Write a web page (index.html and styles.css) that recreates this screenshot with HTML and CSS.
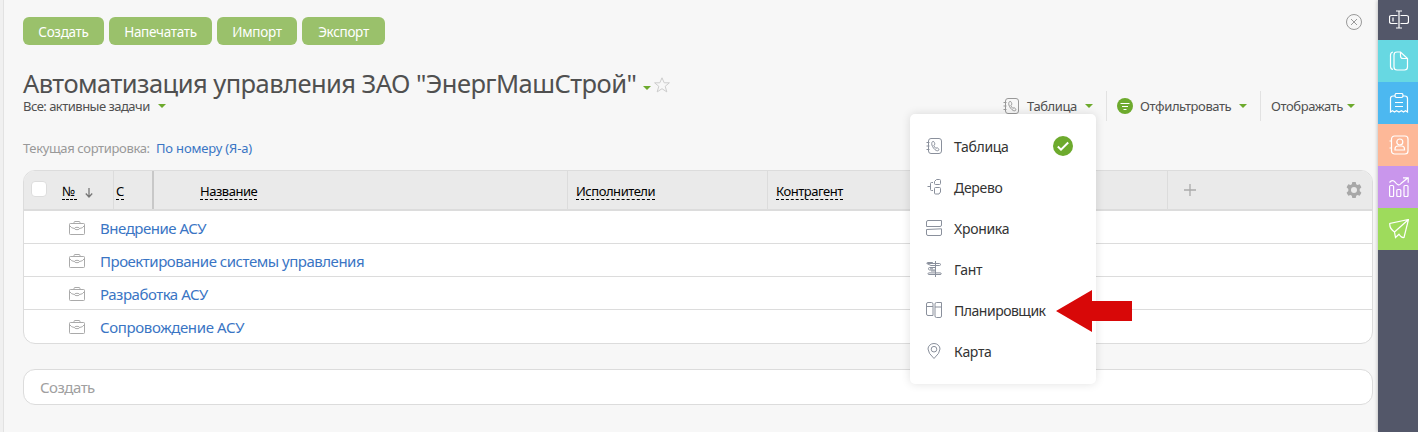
FILE: index.html
```html
<!DOCTYPE html>
<html lang="ru">
<head>
  <title>Автоматизация управления</title>
  <meta charset="UTF-8"/>
  <meta name="viewport" content="width=device-width,initial-scale=1"/>
  <link rel="stylesheet" href="styles.css">
</head>
<body>
  <svg class="defs">
    <symbol id="book" viewBox="0 0 16 16">
      <rect x="2.5" y=".5" width="13" height="15" rx="2.5"/>
      <path d="M.5 4.5h3M.5 8h3M.5 11.5h3M7 3.2c-1.6 1-1.6 3.200-.5 5.300 1.200 2.300 3.500 4.500 5.200 4.300.8-.1 1.500-.9 1.300-1.400l-1.800-1.700-1.400.6c-1-.8-1.700-1.900-2-3l1.100-1c-.1-1.200-.8-2.900-1.900-3.100z"/>
    </symbol>
    <symbol id="case" viewBox="0 0 16 14">
      <rect x=".5" y="2.500" width="15" height="11" rx=".8"/>
      <path d="M5 2.500v-1q0-1 1-1h4q1 0 1 1v1M.5 4.500q2 3 5 3M15.500 4.500q-2 3-5 3"/>
      <ellipse cx="8" cy="7.500" rx="2.500" ry="1.200"/>
    </symbol>
  </svg>
  <main>
    <div class="buttons">
      <button class="b1">Создать</button>
      <button class="b2">Напечатать</button>
      <button class="b3">Импорт</button>
      <button class="b4">Экспорт</button>
      <svg class="close" viewBox="0 0 16 16"><circle cx="8" cy="8" r="7.500"/><path d="M5 5l6 6M11 5l-6 6"/></svg>
    </div>
    <div class="head">
      <div>
        <div class="title">
          <h1>Автоматизация управления ЗАО "ЭнергМашСтрой"</h1>
          <i class="caret"></i>
          <svg class="star" viewBox="0 0 16 16"><path d="M8 .8l2.200 5h5.200l-4.200 3.500 1.600 5.600L8 11.700l-4.800 3.200 1.600-5.600L.6 5.800h5.200z"/></svg>
        </div>
        <div class="view"><span>Все: активные задачи</span><i class="caret"></i></div>
      </div>
      <div class="tools">
        <div class="tool t1">
          <svg class="icon grey"><use href="#book"/></svg>
          <span>Таблица</span><i class="caret"></i>
          <ul class="menu">
            <li>
              <svg class="icon"><use href="#book"/></svg><span>Таблица</span>
              <svg class="check" viewBox="0 0 20 20"><circle cx="10" cy="10" r="10"/><path d="M4.800 10.500l3.200 3.200 7.200-7.200"/></svg>
            </li>
            <li>
              <svg class="icon" viewBox="0 0 16 16"><path d="M1.500 7.500h3M7 3.500H5.500q-1 0-1 1v6q0 1 1 1H7"/><path d="M10.500.5h3q1 0 1 1v3q0 1-1 1h-4q-1 0-1-1v-2zM9.500 8.500h4q1 0 1 1v3.500l-1.500 2h-3.500q-1 0-1-1v-4.500q0-1 1-1z"/></svg><span>Дерево</span>
            </li>
            <li>
              <svg class="icon" viewBox="0 0 16 16"><path d="M2 .5h13.500v4.500q0 1.500-1.500 1.500H.5V2Q.5.500 2 .5zM.5 9.500l15-.7v5.200q0 1.500-1.500 1.500H2q-1.500 0-1.500-1.500z"/></svg><span>Хроника</span>
            </li>
            <li>
              <svg class="icon" viewBox="0 0 16 16"><path d="M9.500 0v16M1.500 2.500h12q1 0 1 1t-1 1h-4M9.500 4.500H5L.8 2.500q0-1 1-1h5M9.500 6.500H3.500q-1 0-1 1.200t1 1.300h6M9.500 13.500H3q-1 0-1-.8t1-.8h11q1.300 0 1.300.8t-1.300.8H9.500M4 7.800h3M5 10h4"/></svg><span>Гант</span>
            </li>
            <li>
              <svg class="icon" viewBox="0 0 16 16"><path d="M2 .5h3.500q1.500 0 1.500 1.500v11.500H2Q.5 13.500.5 12V2Q.5.500 2 .5zM.5 4.500H7M15.500.5v13.500q0 1.500-1.500 1.500h-3.500q-1.500 0-1.500-1.500V2Q9 .5 10.500.5zM9 5h6.500"/></svg><span class="planner">Планировщик</span>
              <svg class="arrow" viewBox="0 0 76 42"><path d="M0 21L36 0v11h40v20H36v11z"/></svg>
            </li>
            <li>
              <svg class="icon" viewBox="0 0 16 16"><path d="M8 15.500Q2 10 2 6a6 5.500 0 0 1 12 0q0 4-6 9.500z"/><circle cx="8" cy="6.200" r="2.800"/></svg><span>Карта</span>
            </li>
          </ul>
        </div>
        <div class="tool t2">
          <svg class="filter" viewBox="0 0 16 16"><circle cx="8" cy="8" r="8"/><path d="M3.500 5.500h9M5 8.500h6M6.500 11.500h3"/></svg>
          <span>Отфильтровать</span><i class="caret"></i>
        </div>
        <div class="tool t3"><span>Отображать</span><i class="caret"></i></div>
      </div>
    </div>
    <div class="sort"><span>Текущая сортировка:</span><a>По номеру (Я-а)</a></div>
    <div class="table">
      <div class="row header">
        <div class="num"><i class="checkbox"></i><span>№</span><svg class="down" viewBox="0 0 8 10"><path d="M4 0v9M.8 5.500L4 9l3.200-3.500"/></svg></div>
        <div class="c"><span>С</span></div>
        <div class="name"><span>Название</span></div>
        <div><span>Исполнители</span></div>
        <div><span>Контрагент</span></div>
        <div></div>
        <div class="last">
          <svg class="plus" viewBox="0 0 12 12"><path d="M6 0v12M0 6h12"/></svg>
          <svg class="gear" viewBox="0 0 16 16"><path d="M6.300 0h3.400l.5 2.300 1.300.8 2.200-.8 1.700 3-1.700 1.600v2.200l1.700 1.600-1.700 3-2.200-.8-1.300.8-.5 2.300H6.300l-.5-2.300-1.300-.8-2.200.8-1.700-3 1.700-1.600V6.900L.6 5.300l1.700-3 2.200.8 1.300-.8z"/><circle cx="8" cy="8" r="3"/></svg>
        </div>
      </div>
      <div class="row item"><svg class="case"><use href="#case"/></svg><a>Внедрение АСУ</a></div>
      <div class="row item"><svg class="case"><use href="#case"/></svg><a>Проектирование системы управления</a></div>
      <div class="row item"><svg class="case"><use href="#case"/></svg><a>Разработка АСУ</a></div>
      <div class="row item"><svg class="case"><use href="#case"/></svg><a class="wide">Сопровождение АСУ</a></div>
    </div>
    <div class="create">Создать</div>
  </main>
  <nav>
    <div class="rename"><svg viewBox="0 0 20 20"><path d="M8.500 5.500H2.500q-2 0-2 2v4q0 2 2 2h6M11.500 5.500h6q2 0 2 2v4q0 2-2 2h-6M10 1v17M7 1h6M7 18h6M4 7.500v4"/></svg></div>
    <div class="files"><svg viewBox="0 0 20 20"><path d="M11.500 1H8Q5 1 5 4v12q0 3 3 3h7.500q3 0 3-3V7.500zM11.500 1v4q0 2.500 2.500 2.500h4.500M4 1Q1.500 1.500 1.500 4v11.500q0 2.500 2.500 3"/></svg></div>
    <div class="tasks"><svg viewBox="0 0 20 20"><path d="M6 3H4Q1.500 3 1.500 5.500V19l2-1.200 2 1.200 2-1.200 2.500 1.200 2.500-1.200 2 1.200 2-1.200 2 1.200V5.500Q18.500 3 16 3h-2"/><path d="M7.500.5h5q1.500 0 1.500 2t-1.500 2h-5Q6 4.500 6 2.500t1.500-2zM6 9.500h8M6 13.500h8"/></svg></div>
    <div class="contacts"><svg viewBox="0 0 20 20"><rect x="2.500" y="1" width="16.500" height="18" rx="3"/><circle cx="10.800" cy="7" r="3"/><path d="M6 15v-1q0-3 3-3h3.500q3 0 3 3v1zM.5 6h2M.5 13h2"/></svg></div>
    <div class="charts"><svg viewBox="0 0 20 20"><rect x=".6" y="8.500" width="4" height="11" rx="1"/><rect x="7.800" y="12.500" width="4" height="7" rx="1"/><rect x="15" y="8.500" width="4" height="11" rx="1"/><path d="M.5 5.500q3-3.500 5.500-.5 3.500 5 6 1.500L19 .8M14 .8h5.200v5"/></svg></div>
    <div class="send"><svg viewBox="0 0 20 20"><path d="M19.500.5L.8 4.500q-.5 5 4.700 8.500l1 5.500 3.500-3.300q2.500 4 5 3.300zM19.500.5L5.500 13"/></svg></div>
  </nav>
</body>
</html>
```
FILE: styles.css
```css
* {
  box-sizing: border-box;
}
body {
  margin: 0;
  width: 1418px;
  height: 432px;
  display: flex;
  overflow: hidden;
  background: #f7f7f7;
  font: 13px "Noto Sans", "Open Sans", sans-serif;
  color: #505050;
}
svg {
  fill: none;
  stroke: #999;
  flex: none;
}
.defs {
  display: none;
}
main {
  width: 1378px;
  padding: 17px 5px 0 19px;
  border-left: 1px solid #e2e2e2;
  box-shadow: -3px 0 #f0f0f0;
  margin-left: 3px;
}
.buttons {
  display: flex;
  gap: 5px;
}
button {
  height: 28px;
  padding: 2px 0 0;
  border: 0;
  border-radius: 6px;
  background: #9ac16b;
  color: #fff;
  font: 13.5px "Noto Sans", sans-serif;
  letter-spacing: -.3px;
}
.b1 { width: 81px; }
.b2 { width: 103px; }
.b3 { width: 80px; }
.b4 { width: 83px; }
.close {
  width: 16px;
  height: 16px;
  margin: -3px 11px 0 auto;
}
.caret {
  border: 4px solid transparent;
  border-top-color: #6daa2d;
  border-bottom: 0;
}
.head {
  display: flex;
  justify-content: space-between;
  align-items: flex-end;
  height: 55px;
  margin-top: 21px;
}
.head > div:first-child {
  height: 55px;
}
.title {
  display: flex;
  height: 33px;
}
h1 {
  margin: 0;
  font-size: 25.5px;
  font-weight: normal;
  letter-spacing: -.54px;
  line-height: 34px;
  white-space: nowrap;
  width: 620px;
}
.title .caret {
  margin-top: 20px;
  align-self: flex-start;
}
.star {
  width: 16px;
  height: 16px;
  margin: 11px 0 0 3px;
  stroke: #ccc;
}
.view {
  display: flex;
  align-items: center;
  height: 14px;
}
.view span {
  width: 135px;
  white-space: nowrap;
  letter-spacing: -.52px;
}
.tools {
  display: flex;
  padding-right: 8px;
}
.tool {
  position: relative;
  display: flex;
  align-items: center;
  height: 30px;
  white-space: nowrap;
}
.tool > span {
  letter-spacing: -.42px;
}
.tool + .tool {
  border-left: 1px solid #e2e2e2;
}
.t1 { width: 103px; }
.t2 { width: 154px; padding-left: 10px; }
.t3 { width: 105px; padding-left: 10px; }
.icon {
  width: 16px;
  height: 16px;
  stroke: #8a909c;
}
.icon.grey {
  stroke: #999;
}
.t1 > span {
  width: 58px;
  margin-left: 8px;
}
.t2 > span {
  width: 99px;
  margin-left: 7px;
}
.t3 > span {
  width: 76px;
}
.filter {
  width: 16px;
  height: 16px;
  fill: #6daa2d;
  stroke: none;
}
.filter path {
  stroke: #fff;
}
.menu {
  position: absolute;
  top: 23px;
  right: 10px;
  z-index: 1;
  width: 186px;
  height: 270px;
  margin: 0;
  padding: 11.5px 23px 0 16px;
  list-style: none;
  background: #fff;
  border-radius: 5px;
  box-shadow: 0 0 10px rgba(0, 0, 0, .12);
  font-size: 14px;
  letter-spacing: -.32px;
  color: #333;
}
.menu li {
  position: relative;
  display: flex;
  align-items: center;
  height: 41px;
}
.menu span {
  margin: 1px 0 0 12px;
}
.menu .planner {
  letter-spacing: -.5px;
}
.check {
  width: 20px;
  height: 20px;
  margin-left: auto;
  fill: #6daa2d;
  stroke: none;
}
.check path {
  fill: none;
  stroke: #fff;
  stroke-width: 2;
}
.arrow {
  position: absolute;
  left: 130px;
  top: .5px;
  width: 76px;
  height: 42px;
  fill: #d80808;
  stroke: none;
}
.sort {
  display: flex;
  height: 18px;
  margin-top: 18px;
  line-height: 18px;
  color: #999;
  white-space: nowrap;
}
.sort span {
  width: 133px;
  letter-spacing: -.35px;
}
.sort a {
  letter-spacing: -.17px;
}
a {
  color: #3a75c4;
}
.table {
  height: 174px;
  margin-top: 13px;
  border: 1px solid #dcdcdc;
  border-radius: 12px;
  background: #fff;
  overflow: hidden;
}
.header {
  display: grid;
  grid-template-columns: 90px 40px 414px 200px 200px 200px 1fr;
  height: 40px;
  background: #eaeaea;
  border-bottom: 2px solid #dcdcdc;
  color: #000;
}
.header > div {
  display: flex;
  align-items: center;
  padding: 2px 0 0 8px;
  border-right: 1px solid #dcdcdc;
}
.header span {
  padding-top: 2px;
  line-height: 15px;
  border-bottom: 1px dashed #000;
  white-space: nowrap;
  letter-spacing: -.47px;
}
.header .num {
  padding-left: 7px;
}
.header .num span {
  width: 15px;
  letter-spacing: 0;
}
.header .c {
  padding-left: 2px;
  border-right: 2px solid #c8c8c8;
}
.header .name {
  padding-left: 46px;
}
.header .last {
  justify-content: space-between;
  padding: 0 10px 0 16px;
  border: 0;
}
.checkbox {
  width: 16px;
  height: 16px;
  margin: -5px 15px 0 0;
  background: #fff;
  border: 1px solid #ddd;
  border-radius: 4px;
}
.down {
  width: 8px;
  height: 10px;
  margin: 3px 0 0 8px;
  stroke: #777;
  stroke-width: 1.3;
}
.plus {
  width: 12px;
  height: 12px;
  stroke: #aaa;
  stroke-width: 1.3;
}
.gear {
  width: 16px;
  height: 16px;
  fill: #a8a8a8;
  stroke: none;
}
.gear circle {
  fill: #eaeaea;
}
.item {
  display: flex;
  align-items: center;
  height: 33px;
  padding: 1px 0 0 45px;
  border-bottom: 1px solid #dcdcdc;
  font-size: 15px;
  letter-spacing: -.48px;
}
.item:last-child {
  border: 0;
}
.item .wide {
  letter-spacing: -.36px;
}
.case {
  width: 16px;
  height: 14px;
  margin-right: 15px;
  stroke: #aaa;
}
.create {
  height: 36px;
  margin-top: 25px;
  padding-left: 16px;
  border: 1px solid #dcdcdc;
  border-radius: 12px;
  background: #fff;
  font-size: 15px;
  letter-spacing: -.5px;
  line-height: 34px;
  color: #a0a0a0;
}
nav {
  width: 40px;
  background: #535769;
  box-shadow: 0 0 4px rgba(0, 0, 0, .3);
}
nav div {
  display: flex;
  align-items: center;
  justify-content: center;
  height: 42px;
}
nav svg {
  width: 20px;
  height: 20px;
  margin-left: 2px;
  stroke: #fff;
  stroke-width: 1.2;
}
nav .rename { height: 40px; }
.files { background: #67d8e2; }
.tasks { background: #4cb8f0; }
.contacts { background: #fdb898; }
.charts { background: #c996ec; }
.send { background: #9edb5c; }
```
